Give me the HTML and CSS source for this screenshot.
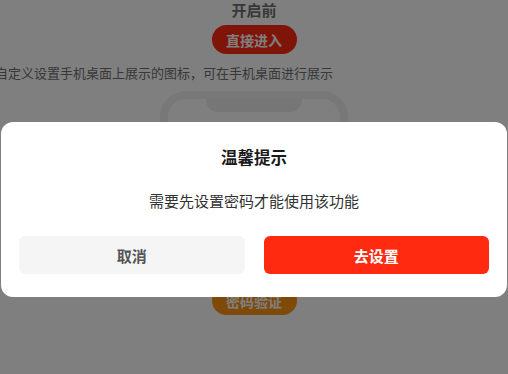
FILE: index.html
```html
<!DOCTYPE html>
<html lang="zh-CN">
<head>
<meta charset="utf-8">
<link rel="stylesheet" href="styles.css">
</head>
<body>
<div class="page">
  <div class="heading">开启前</div>
  <div class="pill pill-red">直接进入</div>
  <div class="desc">自定义设置手机桌面上展示的图标，可在手机桌面进行展示</div>
  <div class="phone"><div class="notch"></div></div>
  <div class="pill pill-orange">密码验证</div>
</div>
<div class="mask"></div>
<div class="dialog">
  <div class="dialog-title">温馨提示</div>
  <div class="dialog-msg">需要先设置密码才能使用该功能</div>
  <div class="dialog-actions">
    <div class="btn btn-cancel">取消</div>
    <div class="btn btn-ok">去设置</div>
  </div>
</div>
</body>
</html>
```
FILE: styles.css
```css
html, body {
  margin: 0;
  padding: 0;
  background: #fff;
  width: 508px;
  height: 374px;
  overflow: hidden;
  font-family: "Noto Sans CJK SC", "Noto Sans", sans-serif;
}
.page {
  display: flex;
  flex-direction: column;
  align-items: center;
  width: 508px;
}
.heading {
  font-size: 15px;
  font-weight: 700;
  line-height: 20px;
  color: #707070;
}
.pill {
  margin-top: 5px;
  width: 85px;
  height: 29px;
  border-radius: 15px;
  color: #fff;
  font-size: 14px;
  font-weight: 700;
  display: flex;
  align-items: center;
  justify-content: center;
}
.pill-red { background: #ff2a10; }
.pill-orange { background: #ff9210; margin-top: 9px; }
.desc {
  align-self: flex-start;
  margin-left: -5px;
  margin-top: 10px;
  font-size: 13px;
  line-height: 18px;
  color: #707070;
  white-space: nowrap;
}
.phone {
  margin-top: 9px;
  width: 172px;
  height: 170px;
  border: 8px solid #f0f0f0;
  border-radius: 26px;
  display: flex;
  justify-content: center;
}
.notch {
  width: 96px;
  height: 13px;
  background: #ececec;
  border-radius: 0 0 12px 12px;
}
.mask {
  position: fixed;
  inset: 0;
  background: rgba(0, 0, 0, 0.5);
}
.dialog {
  position: fixed;
  left: 1px;
  top: 122px;
  width: 506px;
  background: #fff;
  border-radius: 12px;
  box-sizing: border-box;
  padding: 24px 18px 23px;
  display: flex;
  flex-direction: column;
  align-items: center;
}
.dialog-title {
  font-size: 16.5px;
  font-weight: 700;
  line-height: 22px;
  color: #1a1a1a;
}
.dialog-msg {
  margin-top: 23px;
  font-size: 15px;
  line-height: 20px;
  color: #333;
}
.dialog-actions {
  margin-top: 25px;
  display: flex;
  gap: 19px;
  width: 100%;
}
.btn {
  flex: 1;
  height: 38px;
  border-radius: 6px;
  display: flex;
  align-items: center;
  justify-content: center;
  font-size: 15px;
  font-weight: 700;
}
.btn-cancel { background: #f5f5f5; color: #555; }
.btn-ok { background: #ff2a10; color: #fff; }
```
